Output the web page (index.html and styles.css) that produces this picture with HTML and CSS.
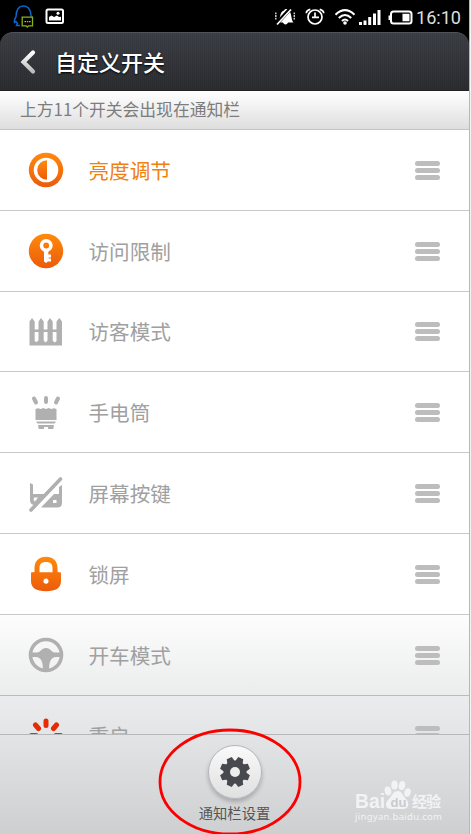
FILE: index.html
```html
<!DOCTYPE html>
<html lang="zh-CN">
<head>
<meta charset="UTF-8">
<meta name="viewport" content="width=device-width, initial-scale=1.0">
<link rel="stylesheet" href="styles.css">
<title>自定义开关</title>
</head>
<body>
<svg class="defs" width="0" height="0">
<defs>
<linearGradient id="orange" x1="0" y1="0" x2="0" y2="1"><stop offset="0" stop-color="#ff8a0c"/><stop offset="1" stop-color="#ec5b0a"/></linearGradient>
<linearGradient id="silver" x1="0" y1="0" x2="0" y2="1"><stop offset="0" stop-color="#fff"/><stop offset="1" stop-color="#bbb"/></linearGradient>
</defs>
</svg>
<div class="phone">

<div class="status">
<svg width="469" height="32" viewBox="0 0 469 32">
<!-- qq -->
<path d="M20 25.500h-3.500l1-2-1.500-2-1.500 1c-.8-2 .5-4 1.600-6C16.200 9 19 6 23.500 6s7 3 7.500 9.500l1 2" fill="none" stroke="#0a67cc" stroke-width="1.500"/>
<path d="M22.200 17.200h10.300v8.600h-4l-1.200 1.200-1.200-1.200h-3.900z" fill="#000" stroke="#8ab216" stroke-width="1.300"/>
<path d="M24.500 21.700h1.500m.8 0h1.500m.8 0h1.500" stroke="#a8cf20" stroke-width="1.300"/>
<!-- picture -->
<rect x="46.500" y="9.500" width="16.500" height="13.500" rx="1.500" fill="none" stroke="#fff" stroke-width="2"/>
<path d="M49 20.500v-3.500l2.500-1.500 2.500 1.500 3-1.500 2 1.500 2-.3v3.800z" fill="#fff"/><circle cx="58" cy="13.300" r="1.500" fill="#fff"/>
<!-- silent -->
<path d="M277.500 22.500c3.500-3 1.500-11 6.500-12 1-2 3.500-2 4 0 4.500 1.500 2.500 9 5.500 12h-5.500c-1 2.500-4 2.500-5 0z" fill="#fff"/>
<path d="M276 24.500L291 8" stroke="#000" stroke-width="4"/><path d="M277 24.500L291 9.500" stroke="#fff" stroke-width="1.700"/>
<path d="M275.800 12.500v7.500M294.300 12.500v7.500" stroke="#ccc" stroke-width="1.500" stroke-dasharray="1.800 .8"/>
<!-- alarm -->
<circle cx="315" cy="17" r="7" fill="none" stroke="#fff" stroke-width="1.700"/>
<path d="M315 12.500v4.800h4M312 17.300h3M306.300 13.200q0-3 4-3.900M323.700 13.200q0-3-4-3.900" fill="none" stroke="#fff" stroke-width="1.700"/>
<!-- wifi -->
<path d="M335.500 14.700q9.500-9 19 0M338.800 18q6.200-6 12.400 0M342 21q3-3 6 0" fill="none" stroke="#fff" stroke-width="2.100"/><circle cx="345" cy="23" r="1.800" fill="#fff"/>
<!-- signal -->
<path d="M360.500 25v-3M365 25v-4.500M369.700 25v-8M374.500 25V13.500M379 25V10" stroke="#fff" stroke-width="3"/>
<!-- battery -->
<rect x="391" y="11.500" width="20.500" height="12" rx="2.500" fill="none" stroke="#fff" stroke-width="2"/><path d="M388.500 15.500h2v4.500h-2zM402.500 13.800h7v7.400h-7z" fill="#fff"/>
<text class="clock" x="416" y="24" textLength="45" lengthAdjust="spacingAndGlyphs">16:10</text>
</svg>
</div>

<div class="header-wrap">
<div class="header">
<svg class="back" width="18" height="26" viewBox="0 0 18 26"><path d="M14 3.500L4.500 13l9.500 9.500" fill="none" stroke="url(#silver)" stroke-width="4.200" stroke-linecap="round" stroke-linejoin="miter"/></svg>
<h1>自定义开关</h1>
</div>
</div>

<div class="hint">上方11个开关会出现在通知栏</div>

<ul class="list">
<li class="row on">
<svg class="icon" viewBox="0 0 36 36"><circle cx="18" cy="18" r="17.200" fill="url(#orange)"/><circle cx="18" cy="18" r="12.300" fill="#fff"/><path d="M19 8.200a9.800 9.800 0 0 0 0 19.600z" fill="url(#orange)"/></svg>
<span>亮度调节</span><i class="grip"></i>
</li>
<li class="row">
<svg class="icon" viewBox="0 0 36 36"><circle cx="18" cy="18" r="17.200" fill="url(#orange)"/><circle cx="18.200" cy="12.500" r="4.700" fill="none" stroke="#fff" stroke-width="3.600"/><path d="M16 17h4.300v4.500h2.700v3h-2.300v1h2.300v3h-3.200l-1.700 1.500-2.100-1.500z" fill="#fff"/></svg>
<span>访问限制</span><i class="grip"></i>
</li>
<li class="row">
<svg class="icon" viewBox="0 0 36 36" fill="#b0b0b0"><path d="M1.500 31.500V7.500L4 4l2.700 3.500v8h3.800v-8L13 4l2.700 3.500v8h3.800v-8L22 4l2.700 3.500v8h3.800v-8L31.300 4 34 7.500v24zM6.700 18v9l1.800 1.200 2-2V18zM15.700 18v8.500l1.900 2 1.900-2V18zM24.700 18v8.500l1.900 2 1.900-1.300V18z" fill-rule="evenodd"/></svg>
<span>访客模式</span><i class="grip"></i>
</li>
<li class="row">
<svg class="icon" viewBox="0 0 36 36" fill="#b0b0b0"><path d="M6 3.500l2 4M18 3v4M30 3.500l-2 4" stroke="#b0b0b0" stroke-width="4" stroke-linecap="round"/><path d="M7.500 14l2.500-.8 3 .8 2-1 3 1 3-1 2 1 3-.8 2.500.8v11h-21zM8 26.500h20l-1.500 2h-17zM10 30h16l-.7 4H20v-2h-4v2h-5.300z"/></svg>
<span>手电筒</span><i class="grip"></i>
</li>
<li class="row">
<svg class="icon" viewBox="0 0 36 36" fill="#b0b0b0"><path d="M2 7l3 1.500V18h12L7 29q-5 0-5-5zM34 9v18q0 4.500-5 4.500H13L26 18h5V11z"/><path d="M6 21.500h4l-3 4q-2-1-1-4zM25 24h3.500v3H25z" fill="#fff"/><path d="M3 34L32.500 3" stroke="#b0b0b0" stroke-width="3.600" stroke-linecap="round"/></svg>
<span>屏幕按键</span><i class="grip"></i>
</li>
<li class="row">
<svg class="icon" viewBox="0 0 36 36"><path d="M3 16.500l3.500-.5v-4C6.500 5 11 .8 18 .8S29.500 5 29.500 12v4l3.500.5V25c0 7-5 10.200-15 10.200S3 32 3 25zM11.500 16.300h13V12c0-4-2-6-6.500-6s-6.500 2-6.500 6zM18 22.600a2.600 2.600 0 1 0 .01 0z" fill="url(#orange)" fill-rule="evenodd"/></svg>
<span>锁屏</span><i class="grip"></i>
</li>
<li class="row shade">
<svg class="icon" viewBox="0 0 36 36"><circle cx="18" cy="18" r="15.500" fill="none" stroke="#b0b0b0" stroke-width="3.600"/><path d="M3 15.500h6c4 0 4-4.500 9-4.500s5 4.500 9 4.500h6V20h-5c-5 0-7 5-7 13h-6c0-8-2-13-7-13H3z" fill="#b0b0b0"/></svg>
<span>开车模式</span><i class="grip"></i>
</li>
<li class="row shade last">
<svg class="icon" viewBox="0 0 36 36"><path d="M18 3v4.500M7.500 7l3 3.500M28.500 7l-3 3.500M3.500 17.500h4.500M28 17.500h4.500" stroke="#e62a05" stroke-width="5" stroke-linecap="round"/></svg>
<span>重启</span><i class="grip"></i>
</li>
</ul>

<div class="footer">
<div class="gear">
<svg width="32" height="32" viewBox="-16 -16 32 32">
<g fill="#47494f"><circle r="11.500"/>
<path id="tooth" d="M-4-10l1.300-5h5.400l1.300 5zM-4 10l1.300 5h5.400l1.300-5z" transform="rotate(22.500)"/>
<use href="#tooth" transform="rotate(45)"/><use href="#tooth" transform="rotate(90)"/><use href="#tooth" transform="rotate(135)"/></g>
<circle r="5" fill="#ededee"/>
</svg>
</div>
<span>通知栏设置</span>
</div>

<!-- red ring round the settings button -->
<svg class="ring" width="146" height="112" viewBox="0 0 146 112"><ellipse cx="73" cy="55" rx="70" ry="52" fill="none" stroke="#fc0000" stroke-width="2.800"/></svg>

<svg class="watermark" width="100" height="52" viewBox="0 0 100 52" fill="#f2f3f4">
<text x="3" y="31" font-size="20" font-weight="700" textLength="30" lengthAdjust="spacingAndGlyphs">Bai</text>
<ellipse cx="36" cy="14" rx="3.300" ry="4.500" transform="rotate(-12 36 14)"/><ellipse cx="42.500" cy="8" rx="3.200" ry="4.500"/><ellipse cx="50" cy="8.500" rx="3.200" ry="4.500" transform="rotate(10 50 8.500)"/><ellipse cx="55.500" cy="15.500" rx="3.200" ry="4.300" transform="rotate(15 55.500 15.500)"/>
<path d="M46 14c4 0 5 5 8 8s4 10-3 10c-3 0-7-.7-10 0-7 1-9-5-5-9s5-9 10-9z"/>
<text x="38.500" y="29.500" font-size="13" font-weight="700" class="du">du</text>
<text x="60" y="30" font-size="15" font-weight="700" textLength="29">经验</text>
<text x="3" y="43" font-size="9.500" textLength="87" class="site">jingyan.baidu.com</text>
</svg>
</div>
</body>
</html>
```

FILE: styles.css
```css
* {
    box-sizing: border-box;
}
body {
    margin: 0;
    background: #f4f4f4;
    font-family: "Noto Sans CJK SC", sans-serif;
}
.defs {
    display: block;
}
.phone {
    position: relative;
    width: 470px;
    height: 834px;
    overflow: hidden;
    background: #fff;
    border-right: 1px solid #b8b8b8;
    display: flex;
    flex-direction: column;
}
.status {
    flex: none;
    height: 32px;
    background: #000;
}
.status svg {
    display: block;
}
.clock {
    fill: #ddd;
    font-family: Roboto, sans-serif;
    font-size: 19px;
}
.header-wrap {
    flex: none;
    height: 59px;
    background: #000;
}
.header {
    height: 59px;
    border-radius: 13px 13px 0 0;
    border-top: 1px solid #50535a;
    border-bottom: 1px solid #222;
    background:
        repeating-linear-gradient(90deg, rgba(0,0,0,.07) 0 1px, transparent 1px 2px),
        linear-gradient(#3d4047, #2c2d31);
    display: flex;
    align-items: center;
    padding-left: 19px;
}
.header h1 {
    margin: -2px 0 0 18px;
    color: #fff;
    font-size: 22px;
    font-weight: 500;
    line-height: 30px;
    text-shadow: 0 1px 2px #000;
}
.hint {
    flex: none;
    height: 39px;
    padding-left: 20px;
    line-height: 37px;
    font-size: 16.8px;
    color: #7d7d7d;
    background: linear-gradient(#fff, #dedede);
    border-bottom: 1px solid #c4c4c4;
}
.list {
    flex: none;
    height: 604px;
    margin: 0;
    padding: 0;
    overflow: hidden;
    list-style: none;
}
.row {
    height: 80.8px;
    padding: 1px 29px 0 27.5px;
    display: flex;
    align-items: center;
    border-bottom: 1px solid #c9c9c9;
    color: #a0a0a0;
    font-size: 20.6px;
}
.row span {
    margin-top: -1px;
}
.row.on {
    color: #f08010;
}
.row.shade {
    background: linear-gradient(#fdfdfd, #ebecec);
    border-color: #b9babc;
}
.row.last {
    background: linear-gradient(#ebecee, #dcdddf);
}
.icon {
    width: 36px;
    height: 36px;
    margin-right: 25px;
}
.grip {
    width: 25px;
    height: 19px;
    margin-left: auto;
    display: flex;
    flex-direction: column;
    justify-content: space-between;
}
.grip,
.grip::before,
.grip::after {
    border-radius: 3px;
}
.grip::before,
.grip::after {
    content: "";
    height: 5px;
    background: #bdbdbd;
}
.grip::before {
    box-shadow: 0 7px #bdbdbd;
}
.footer {
    flex: none;
    height: 100px;
    padding-top: 10px;
    border-top: 1px solid #b7b8ba;
    background: linear-gradient(#e3e4e5, #cecfd1);
    display: flex;
    flex-direction: column;
    align-items: center;
    font-size: 14.3px;
    line-height: 20px;
    color: #555;
}
.gear {
    width: 54px;
    height: 54px;
    margin-bottom: 4px;
    border: 1px solid #b5b6ba;
    border-radius: 50%;
    background: linear-gradient(#fafafa, #dfe0e1);
    box-shadow: 0 3px 4px rgba(0,0,0,.22);
    display: flex;
    align-items: center;
    justify-content: center;
}
.ring {
    position: absolute;
    left: 157px;
    top: 727px;
}
.watermark {
    position: absolute;
    left: 352px;
    top: 777px;
    font-family: "Liberation Sans", "Noto Sans CJK SC", sans-serif;
}
.du {
    fill: #c9cacc;
}
.site {
    font-family: "Noto Sans", sans-serif;
}
```
